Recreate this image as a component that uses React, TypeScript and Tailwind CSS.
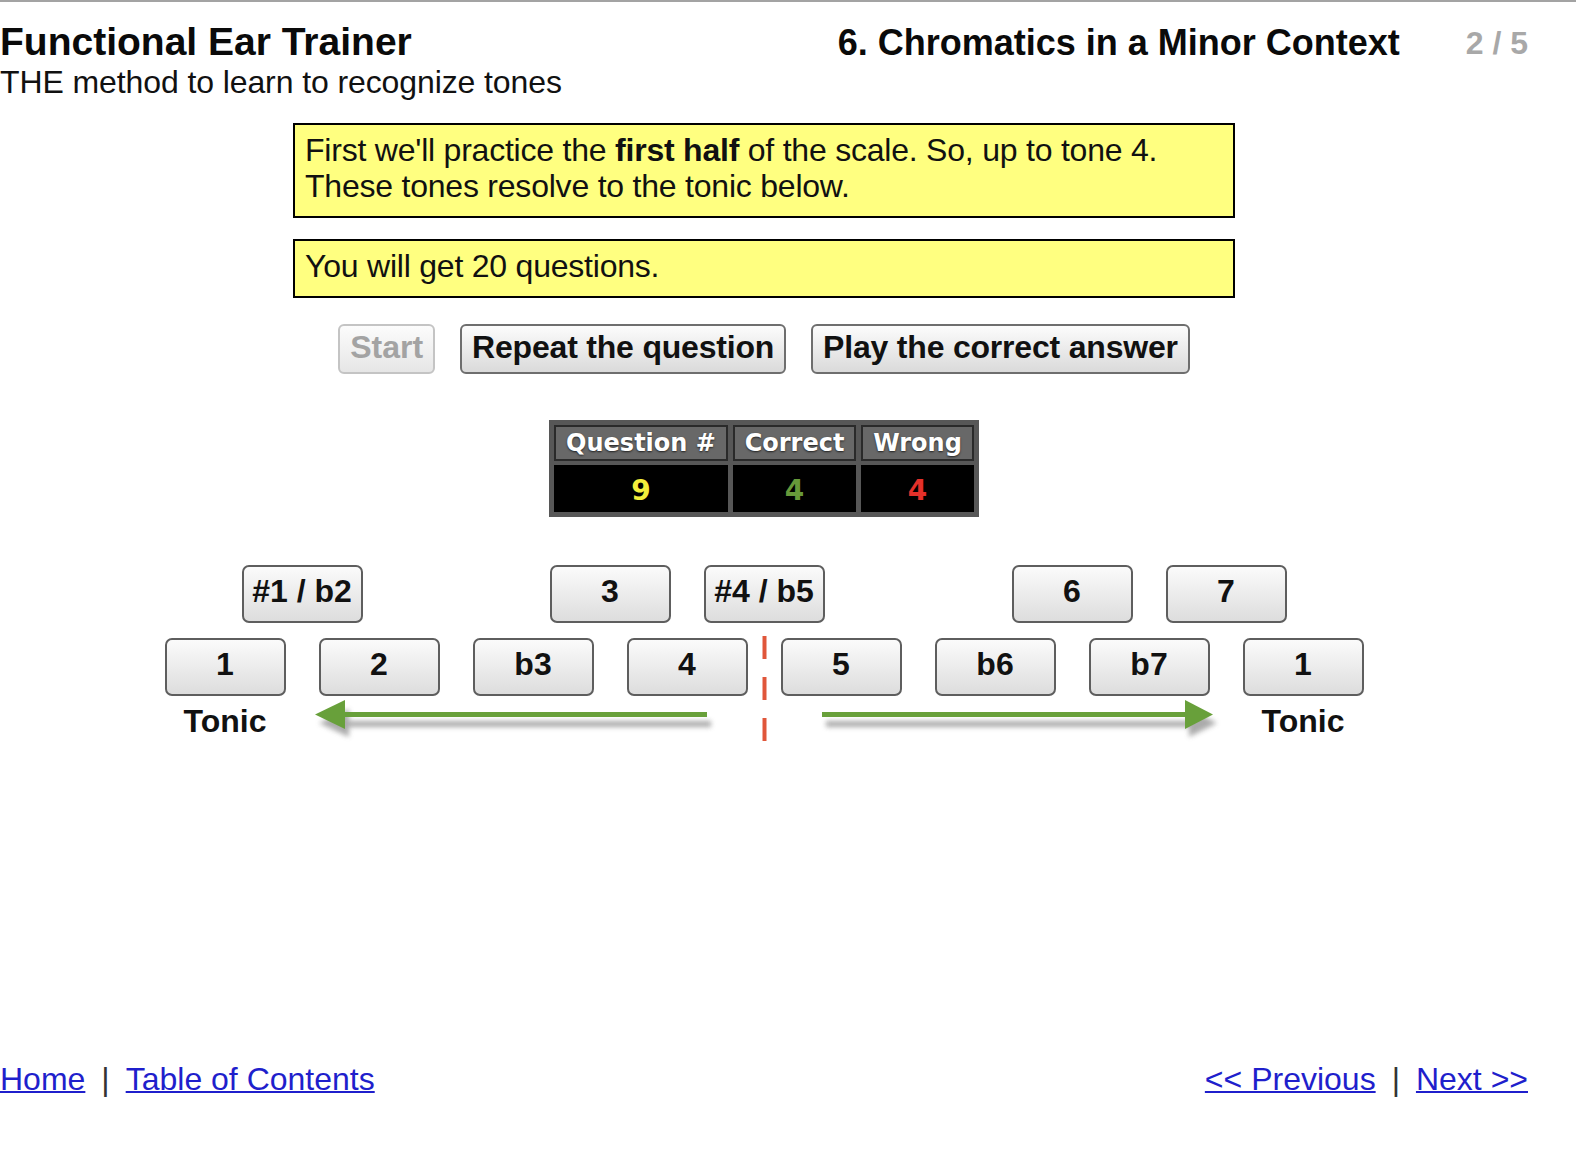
import React from "react";

const keyCls =
  "h-[58px] w-[121px] pb-[6px] flex items-center justify-center rounded-[7px] border-[2px] border-[#5e5e5e] bg-gradient-to-b from-[#fbfbfb] to-[#dddddd] text-[32px] leading-[36px] font-bold text-[#111]";

function Key({ label }: { label: string }) {
  return <div className={keyCls}>{label}</div>;
}

function Btn({ label, disabled }: { label: string; disabled?: boolean }) {
  return (
    <div
      className={
        disabled
          ? "h-[50px] px-[10px] pb-[4px] flex items-center rounded-[6px] border-[2px] border-[#c4c4c4] bg-gradient-to-b from-[#fcfcfc] to-[#e6e6e6] text-[32px] leading-[36px] font-bold text-[#a3a3a3]"
          : "h-[50px] px-[10px] pb-[4px] flex items-center rounded-[6px] border-[2px] border-[#6e6e6e] bg-gradient-to-b from-[#fcfcfc] to-[#dadada] text-[32px] leading-[36px] font-bold text-[#111] tracking-[-0.2px]"
      }
    >
      {label}
    </div>
  );
}

export default function App() {
  return (
    <div className="w-[1576px] h-[1156px] bg-white flex flex-col font-['Liberation_Sans',Arial,sans-serif] text-black">
      <div className="h-[2px] bg-[#a3a3a3]" />
      <div className="w-[1528px] flex-1 flex flex-col">
        {/* Header */}
        <div className="mt-[18px] flex items-baseline justify-between">
          <div className="flex flex-col">
            <div className="text-[39px] leading-[44px] font-bold text-[#0a0a0a]">
              Functional Ear Trainer
            </div>
            <div className="text-[32px] leading-[37px] text-[#111] tracking-[-0.1px]">
              THE method to learn to recognize tones
            </div>
          </div>
          <div className="flex items-baseline gap-[66px]">
            <div className="text-[36px] leading-[44px] font-bold text-[#0a0a0a]">
              6. Chromatics in a Minor Context
            </div>
            <div className="text-[32px] leading-[44px] font-bold text-[#a8a8a8] -translate-y-[1px]">2 / 5</div>
          </div>
        </div>

        {/* Info boxes */}
        <div className="mx-auto mt-[22px] w-[942px] border-[2px] border-black bg-[#ffff80] pl-[10px] pr-[10px] pt-[7px] pb-[12px] text-[32px] leading-[36px] text-[#111] tracking-[-0.22px]">
          First we'll practice the <b>first half</b> of the scale. So, up to tone 4.
          <br />
          These tones resolve to the tonic below.
        </div>
        <div className="mx-auto mt-[21px] w-[942px] border-[2px] border-black bg-[#ffff80] pl-[10px] pr-[10px] pt-[7px] pb-[12px] text-[32px] leading-[36px] text-[#111] tracking-[-0.22px]">
          You will get 20 questions.
        </div>

        {/* Buttons */}
        <div className="mt-[26px] flex justify-center gap-[25px]">
          <Btn label="Start" disabled />
          <Btn label="Repeat the question" />
          <Btn label="Play the correct answer" />
        </div>

        {/* Score table */}
        <div className="mx-auto mt-[46px] w-[430px] bg-[#575757] p-[5px] grid grid-cols-[174px_123px_113px] gap-x-[5px] gap-y-[4px] font-['DejaVu_Sans',Verdana,sans-serif] font-bold">
          {["Question #", "Correct", "Wrong"].map((h) => (
            <div
              key={h}
              className="h-[36px] bg-[#686868] border-[2px] border-[#2a2a2a] flex items-center justify-center text-[24px] leading-none text-white [text-shadow:0_1px_2px_#222]"
            >
              {h}
            </div>
          ))}
          <div className="h-[47px] pt-[4px] bg-black flex items-center justify-center text-[28px] text-[#f3ee3c]">9</div>
          <div className="h-[47px] pt-[4px] bg-black flex items-center justify-center text-[28px] text-[#67993a]">4</div>
          <div className="h-[47px] pt-[4px] bg-black flex items-center justify-center text-[28px] text-[#e4302a]">4</div>
        </div>

        {/* Keyboard */}
        <div className="relative mx-auto mt-[48px] w-[1199px]">
          <div className="grid grid-cols-[repeat(7,121px)] gap-x-[33px] pl-[77px]">
            <Key label="#1 / b2" />
            <div />
            <Key label="3" />
            <Key label="#4 / b5" />
            <div />
            <Key label="6" />
            <Key label="7" />
          </div>
          <div className="mt-[15px] grid grid-cols-[repeat(8,121px)] gap-x-[33px]">
            {["1", "2", "b3", "4", "5", "b6", "b7", "1"].map((k, i) => (
              <Key key={i} label={k} />
            ))}
          </div>
          <div className="mt-[7px] grid grid-cols-[repeat(8,121px)] gap-x-[33px]">
            <div className="text-center text-[32px] leading-[36px] font-bold text-[#111]">Tonic</div>
            <div className="col-span-6 h-[36px]">
              <svg width="891" height="36" viewBox="0 0 891 36" className="overflow-visible">
                <defs>
                  <filter id="sh" x="-10%" y="-100%" width="120%" height="400%">
                    <feGaussianBlur stdDeviation="2.5" />
                  </filter>
                </defs>
                <g transform="translate(0,-3)">
                  <g filter="url(#sh)" fill="#8f8f8f" opacity="0.75">
                    <rect x="30" y="21" width="362" height="6" />
                    <polygon points="0,23 30,9 30,37" />
                    <rect x="507" y="21" width="363" height="6" />
                    <polygon points="870,9 898,23 870,37" />
                  </g>
                  <g fill="#68a03a">
                    <rect x="26" y="12" width="362" height="5" />
                    <polygon points="-4,14.5 26,0 26,29" />
                    <rect x="503" y="12" width="364" height="5" />
                    <polygon points="866,0 894,14.5 866,29" />
                  </g>
                </g>
              </svg>
            </div>
            <div className="text-center text-[32px] leading-[36px] font-bold text-[#111]">Tonic</div>
          </div>
          <svg
            className="absolute left-[597px] top-[71px]"
            width="5"
            height="106"
            viewBox="0 0 5 106"
          >
            <line x1="2.5" y1="0" x2="2.5" y2="106" stroke="#e0563a" strokeWidth="4" strokeDasharray="23 18" />
          </svg>
        </div>

        {/* Footer */}
        <div className="mt-auto pb-[59px] flex justify-between text-[32px] leading-[36px]">
          <div className="flex items-baseline">
            <a className="text-[#1f1fcc] underline decoration-[2px]" href="#">Home</a>
            <span className="mx-[16px] text-[#333]">|</span>
            <a className="text-[#1f1fcc] underline decoration-[2px]" href="#">Table of Contents</a>
          </div>
          <div className="flex items-baseline">
            <a className="text-[#1f1fcc] underline decoration-[2px]" href="#">&lt;&lt; Previous</a>
            <span className="mx-[16px] text-[#333]">|</span>
            <a className="text-[#1f1fcc] underline decoration-[2px]" href="#">Next &gt;&gt;</a>
          </div>
        </div>
      </div>
    </div>
  );
}
